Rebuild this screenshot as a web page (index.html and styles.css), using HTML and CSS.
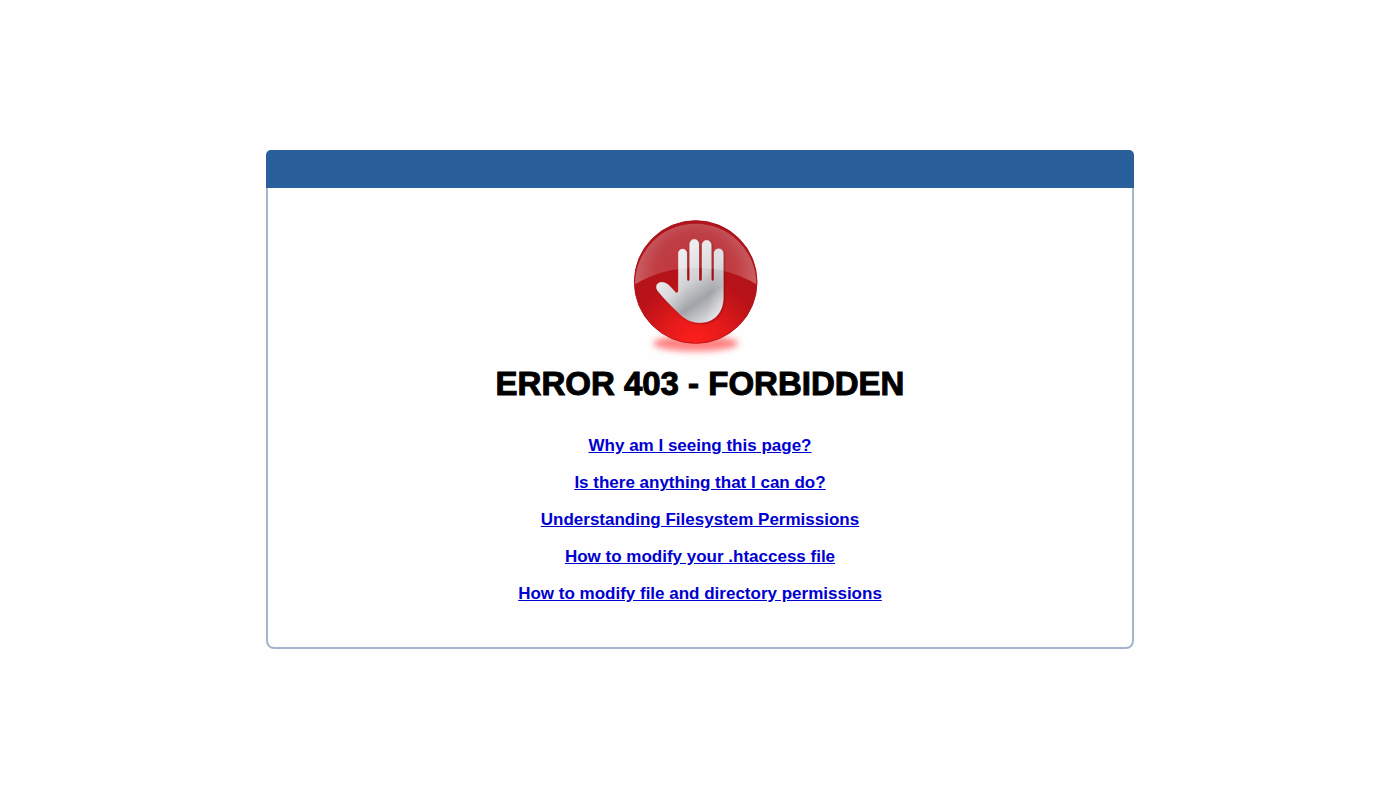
FILE: index.html
```html
<!DOCTYPE html>
<html lang="en">
<head>
<meta charset="utf-8">
<meta name="viewport" content="width=device-width, initial-scale=1">
<title>Error 403 - Forbidden</title>
<link rel="stylesheet" href="styles.css">
</head>
<body>
<main class="card">
  <div class="card-bar"></div>
  <div class="card-body">
    <svg class="stop-icon" viewBox="15 0 450 450" role="img" aria-label="Stop">
      <defs>
        <radialGradient id="ball" gradientUnits="userSpaceOnUse" cx="227" cy="400" r="300">
          <stop offset="0" stop-color="#ff1f1a"/>
          <stop offset=".3" stop-color="#e51a1a"/>
          <stop offset=".65" stop-color="#b81218"/>
          <stop offset="1" stop-color="#b0141c"/>
        </radialGradient>
        <linearGradient id="rim" x1="0" y1="0" x2="0" y2="1">
          <stop offset="0" stop-color="#a5101a"/>
          <stop offset="1" stop-color="#bb161c"/>
        </linearGradient>
        <radialGradient id="gloss" gradientUnits="userSpaceOnUse" cx="227" cy="190" r="200">
          <stop offset="0" stop-color="#fff" stop-opacity=".14"/>
          <stop offset=".6" stop-color="#fff" stop-opacity=".18"/>
          <stop offset="1" stop-color="#fff" stop-opacity=".36"/>
        </radialGradient>
        <linearGradient id="metal" gradientUnits="userSpaceOnUse" x1="165" y1="150" x2="290" y2="335">
          <stop offset="0" stop-color="#e6e6e8"/>
          <stop offset=".36" stop-color="#cfd0d3"/>
          <stop offset=".64" stop-color="#a2a3a8"/>
          <stop offset=".82" stop-color="#c6c7ca"/>
          <stop offset="1" stop-color="#e8e8ea"/>
        </linearGradient>
        <linearGradient id="metal-shine" gradientUnits="userSpaceOnUse" x1="130" y1="230" x2="315" y2="270">
          <stop offset="0" stop-color="#fff" stop-opacity=".3"/>
          <stop offset=".4" stop-color="#fff" stop-opacity="0"/>
          <stop offset=".75" stop-color="#fff" stop-opacity="0"/>
          <stop offset="1" stop-color="#fff" stop-opacity=".35"/>
        </linearGradient>
        <clipPath id="hand-clip"><use href="#hand"/></clipPath>
        <filter id="glow" x="-30%" y="-60%" width="160%" height="220%"><feGaussianBlur stdDeviation="9"/></filter>
        <filter id="shade" x="-20%" y="-20%" width="140%" height="140%"><feGaussianBlur stdDeviation="3"/></filter>
        <path id="hand" d="M175 130 a13 13 0 0 1 26 0 V208 q0 5 4 5 t4 -5 V102 a14 14 0 0 1 28 0 V208 q0 5 4 5 t5 -5 V105 a14 14 0 0 1 28 0 V208 q0 5 4 5 t4 -5 V130 a14 14 0 0 1 28 0 V260 C311 308 282 338 240 338 C213 338 195 328 176 309 C151 285 131 265 114 244 C104 231 110 217 126 217 C144 218 153 233 168 248 Q175 251 175 240 Z"/>
      </defs>
      <ellipse cx="227" cy="400" rx="128" ry="24" fill="#ff4040" opacity=".65" filter="url(#glow)"/>
      <circle cx="227" cy="216" r="184" fill="url(#ball)" stroke="url(#rim)" stroke-width="3"/>
      <path d="M45 223 A182 182 0 1 1 409 223 Q328 174 227 174 T45 223 Z" fill="url(#gloss)"/>
      <use href="#hand" x="3" y="3" fill="#4a0508" opacity=".45" filter="url(#shade)"/>
      <use href="#hand" fill="url(#metal)" stroke="#f0dede" stroke-width="1"/>
      <use href="#hand" fill="url(#metal-shine)"/>
      <path d="M100 0 H350 V190 Q290 174 227 174 T100 195 Z" fill="#fff" opacity=".22" clip-path="url(#hand-clip)"/>
    </svg>
    <h1 class="title">ERROR 403 - FORBIDDEN</h1>
    <nav class="links">
      <a href="#why">Why am I seeing this page?</a>
      <a href="#what">Is there anything that I can do?</a>
      <a href="#permissions">Understanding Filesystem Permissions</a>
      <a href="#htaccess">How to modify your .htaccess file</a>
      <a href="#modify">How to modify file and directory permissions</a>
    </nav>
  </div>
</main>
</body>
</html>
```
FILE: styles.css
```css
* {
  box-sizing: border-box;
}

body {
  margin: 0;
  padding-bottom: 1px;
  min-height: 100vh;
  display: flex;
  align-items: center;
  justify-content: center;
  background: #fefefe;
  font-family: "Liberation Sans", Arial, sans-serif;
}

.card {
  width: 62%;
}

.card-bar {
  height: 38px;
  background: #295f9a;
  border-radius: 5px 5px 0 0;
}

.card-body {
  display: flex;
  flex-direction: column;
  align-items: center;
  padding: 22px 16px 43px;
  border: 2px solid #a3b5cb;
  border-top: 0;
  border-radius: 0 0 8px 8px;
}

.stop-icon {
  width: 150px;
  height: 150px;
}

.title {
  margin: 4px 0 32px;
  font-size: 33px;
  font-weight: 700;
  line-height: 40px;
  color: #000;
  -webkit-text-stroke: 1px #000;
  text-align: center;
}

.links {
  display: flex;
  flex-direction: column;
  align-items: center;
  gap: 17px;
  font-size: 17px;
  font-weight: 700;
  line-height: 20px;
  text-align: center;
}

.links a {
  color: #0000d0;
}
```
